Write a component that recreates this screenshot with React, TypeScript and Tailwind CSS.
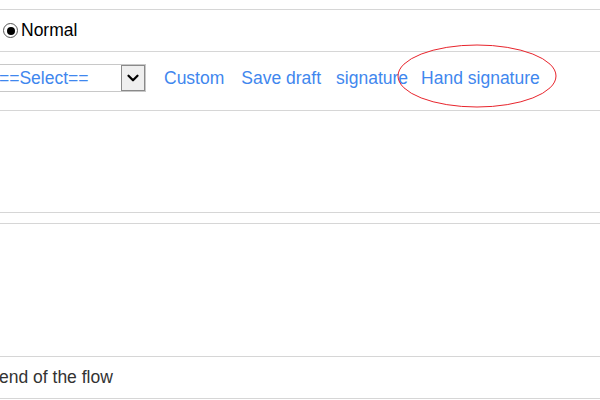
import { ChevronDown } from 'lucide-react'

export default function App() {
  return (
    <main className="relative h-[400px] w-[600px] overflow-hidden bg-white font-['Liberation_Sans',Arial,sans-serif] text-[17.5px]">
      <div className="h-[10px] border-b border-[#d6d6d6]" />

      <div className="flex h-[42px] items-center border-b border-[#d6d6d6] pl-[3px]">
        <span className="flex h-[15px] w-[15px] items-center justify-center rounded-full border border-[#555] bg-white">
          <span className="h-[8px] w-[8px] rounded-full bg-black" />
        </span>
        <span className="ml-[3px] text-black">Normal</span>
      </div>

      <div className="flex h-[59px] items-center border-b border-[#d6d6d6] pb-[6px]">
        <div className="-ml-[24px] flex h-[28px] w-[170px] items-stretch border border-[#c8c8c8] bg-white">
          <span className="flex flex-1 items-center pl-[22px] text-[#3f87ee]">==Select==</span>
          <span className="flex w-[24px] items-center justify-center border border-[#8a8a8a] bg-[#efefef]">
            <ChevronDown className="h-[18px] w-[18px] text-black" strokeWidth={3} />
          </span>
        </div>
        <div className="ml-[18px] flex gap-[15px] text-[#3f87ee]">
          <span>Custom</span>
          <span className="ml-[2px]">Save draft</span>
          <span>signature</span>
          <span className="ml-[-2px]">Hand signature</span>
        </div>
      </div>

      <div className="h-[102px] border-b border-[#d6d6d6]" />
      <div className="h-[11px] border-b border-[#d6d6d6]" />
      <div className="h-[133px] border-b border-[#d6d6d6]" />

      <div className="flex h-[42px] items-center border-b border-[#d6d6d6] text-[#333]">
        <span className="-ml-[1px]">end of the flow</span>
      </div>

      <svg className="pointer-events-none absolute left-[396px] top-[43px]" width="164" height="68">
        <ellipse cx="81" cy="33" rx="79" ry="31" fill="none" stroke="#e8242c" strokeWidth="1" />
      </svg>
    </main>
  )
}
